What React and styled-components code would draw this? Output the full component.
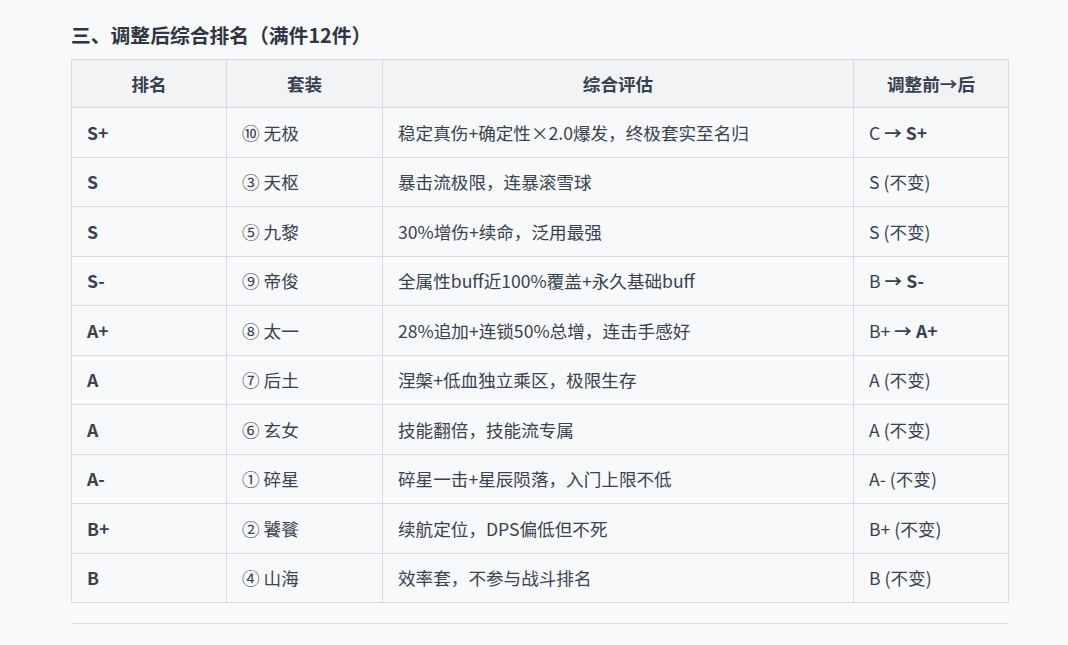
import React from 'react';
import styled, {createGlobalStyle} from "styled-components";

const GlobalStyle = createGlobalStyle`
    html, body {
        margin: 0;
        padding: 0;
        background-color: #f8f9fb;
    }
    body {
        font-family: "Noto Sans CJK SC", "Noto Sans", sans-serif;
        color: #374151;
    }
`;

const Page = styled.div`
    padding: 20px 60px 20px 71px;
    width: 937px;
`;

const Heading = styled.h3`
    margin: 0 0 10px 0;
    font-size: 19.8px;
    font-weight: 700;
    line-height: 29px;
    color: #2f3542;
`;

const Table = styled.table`
    width: 937px;
    border-collapse: collapse;
    table-layout: fixed;
    font-size: 17.6px;
`;

const HeadCell = styled.th`
    height: 47px;
    padding: 0 16px;
    background-color: #f2f3f5;
    border: 1px solid #d7dade;
    font-weight: 700;
    text-align: center;
    color: #374151;
`;

const Cell = styled.td`
    height: 48.5px;
    padding: 0 15px;
    border: 1px solid #d7dade;
    text-align: left;
    color: #3a4250;
    font-weight: ${({bold}) => (bold ? 700 : 400)};
    white-space: nowrap;
`;

const Strong = styled.b`
    font-weight: 700;
`;

const Arrow = styled.span`
    font-weight: 700;
    margin: 0 4px;
`;

const Rule = styled.hr`
    margin: 20px 0 0 0;
    border: 0;
    border-top: 1.5px solid #dcdfe4;
`;

const rows = [
    {rank: "S+", set: "⑩ 无极", note: "稳定真伤+确定性×2.0爆发，终极套实至名归", from: "C", to: "S+"},
    {rank: "S", set: "③ 天枢", note: "暴击流极限，连暴滚雪球", same: "S"},
    {rank: "S", set: "⑤ 九黎", note: "30%增伤+续命，泛用最强", same: "S"},
    {rank: "S-", set: "⑨ 帝俊", note: "全属性buff近100%覆盖+永久基础buff", from: "B", to: "S-"},
    {rank: "A+", set: "⑧ 太一", note: "28%追加+连锁50%总增，连击手感好", from: "B+", to: "A+"},
    {rank: "A", set: "⑦ 后土", note: "涅槃+低血独立乘区，极限生存", same: "A"},
    {rank: "A", set: "⑥ 玄女", note: "技能翻倍，技能流专属", same: "A"},
    {rank: "A-", set: "① 碎星", note: "碎星一击+星辰陨落，入门上限不低", same: "A-"},
    {rank: "B+", set: "② 饕餮", note: "续航定位，DPS偏低但不死", same: "B+"},
    {rank: "B", set: "④ 山海", note: "效率套，不参与战斗排名", same: "B"},
];

function Change({row}) {
    if (row.same) {
        return <>{row.same} (不变)</>;
    }
    return (
        <>
            {row.from}<Arrow>→</Arrow><Strong>{row.to}</Strong>
        </>
    );
}

function App() {
    return (
        <Page>
            <GlobalStyle/>
            <Heading>三、调整后综合排名（满件12件）</Heading>
            <Table>
                <colgroup>
                    <col style={{width: 155}}/>
                    <col style={{width: 156}}/>
                    <col style={{width: 471}}/>
                    <col style={{width: 155}}/>
                </colgroup>
                <thead>
                <tr>
                    <HeadCell>排名</HeadCell>
                    <HeadCell>套装</HeadCell>
                    <HeadCell>综合评估</HeadCell>
                    <HeadCell>调整前→后</HeadCell>
                </tr>
                </thead>
                <tbody>
                {
                    rows.map((row, i) => (
                        <tr key={i}>
                            <Cell bold>{row.rank}</Cell>
                            <Cell>{row.set}</Cell>
                            <Cell>{row.note}</Cell>
                            <Cell><Change row={row}/></Cell>
                        </tr>
                    ))
                }
                </tbody>
            </Table>
            <Rule/>
        </Page>
    );
}

export default App;
